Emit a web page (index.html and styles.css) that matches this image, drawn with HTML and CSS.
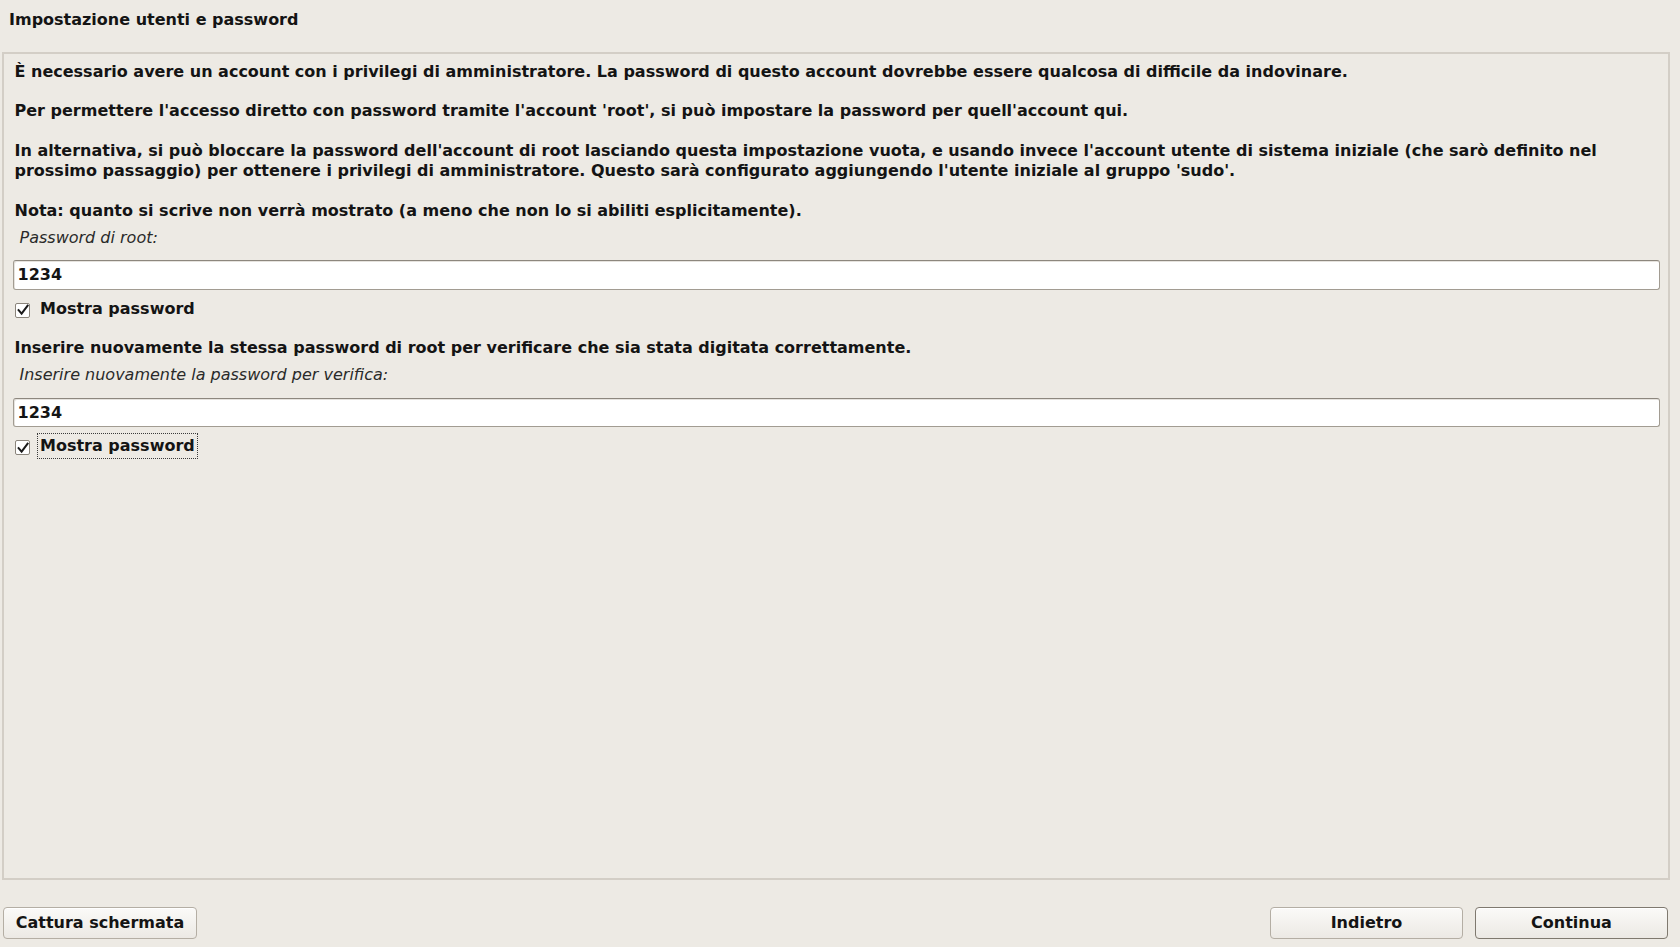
FILE: index.html
```html
<!DOCTYPE html>
<html lang="it">
<head>
<meta charset="utf-8">
<title>Impostazione utenti e password</title>
<link rel="stylesheet" href="styles.css">
</head>
<body>
<header class="title-bar">
  <h1 class="title">Impostazione utenti e password</h1>
</header>
<main class="frame">
  <p class="para para-first">È necessario avere un account con i privilegi di amministratore. La password di questo account dovrebbe essere qualcosa di difficile da indovinare.</p>
  <p class="para">Per permettere l'accesso diretto con password tramite l'account 'root', si può impostare la password per quell'account qui.</p>
  <p class="para">In alternativa, si può bloccare la password dell'account di root lasciando questa impostazione vuota, e usando invece l'account utente di sistema iniziale (che sarò definito nel prossimo passaggio) per ottenere i privilegi di amministratore. Questo sarà configurato aggiungendo l'utente iniziale al gruppo 'sudo'.</p>
  <p class="para para-tight">Nota: quanto si scrive non verrà mostrato (a meno che non lo si abiliti esplicitamente).</p>
  <div class="field-label">Password di root:</div>
  <div class="entry">1234</div>
  <div class="check-row check-row-gap">
    <span class="check-box"><svg width="12" height="12" viewBox="0 0 12 12"><path d="M1.6 6.2 L4.6 9.6 L10.6 1.6" fill="none" stroke="#1a1a1a" stroke-width="2" stroke-linecap="square"/></svg></span>
    <span class="check-label">Mostra password</span>
  </div>
  <p class="para para-tight">Inserire nuovamente la stessa password di root per verificare che sia stata digitata correttamente.</p>
  <div class="field-label">Inserire nuovamente la password per verifica:</div>
  <div class="entry">1234</div>
  <div class="check-row">
    <span class="check-box"><svg width="12" height="12" viewBox="0 0 12 12"><path d="M1.6 6.2 L4.6 9.6 L10.6 1.6" fill="none" stroke="#1a1a1a" stroke-width="2" stroke-linecap="square"/></svg></span>
    <span class="check-label check-label-focus">Mostra password</span>
  </div>
</main>
<footer class="button-bar">
  <button class="btn btn-wide" type="button">Cattura schermata</button>
  <div class="nav-buttons">
    <button class="btn" type="button">Indietro</button>
    <button class="btn btn-default" type="button">Continua</button>
  </div>
</footer>
</body>
</html>
```

FILE: styles.css
```css
html, body {
  margin: 0;
  padding: 0;
}

body {
  height: 947px;
  display: flex;
  flex-direction: column;
  background: #edeae4;
  color: #141414;
  font-family: "DejaVu Sans", "Liberation Sans", sans-serif;
  font-size: 16px;
  font-weight: bold;
  overflow: hidden;
}

.title-bar {
  flex: none;
  height: 52px;
  box-sizing: border-box;
  padding: 9.5px 0 0 9px;
}

.title {
  margin: 0;
  font-size: 16px;
  line-height: 20px;
  font-weight: bold;
}

.frame {
  flex: 1;
  margin: 0 10px 0 2px;
  border: 2px solid #d3cec6;
  padding: 7.7px 8px 0 9px;
  min-height: 0;
}

.para {
  margin: 0 0 20px;
  padding-left: 1.5px;
  line-height: 20px;
}

.para-first {
  margin-bottom: 19px;
}

.para-tight {
  margin-bottom: 7px;
}

.field-label {
  padding-left: 6.5px;
  line-height: 20px;
  font-style: italic;
  font-weight: normal;
  color: #2a2a2a;
}

.entry {
  margin-top: 12.5px;
  height: 29.5px;
  box-sizing: border-box;
  border: 1px solid #a29c92;
  border-top-color: #8d877e;
  border-radius: 3px;
  background: #ffffff;
  padding-left: 3.5px;
  line-height: 27.5px;
  box-shadow: inset 1px 1px 0 #e6e3de;
}

.check-row {
  display: flex;
  align-items: center;
  height: 26px;
  margin-top: 6px;
  padding-left: 2px;
}

.check-row-gap {
  margin-bottom: 16.5px;
}

.check-box {
  width: 15px;
  height: 15px;
  box-sizing: border-box;
  margin-top: 3px;
  border: 1px solid #8a847b;
  border-radius: 2px;
  background: #ffffff;
  display: flex;
  align-items: center;
  justify-content: center;
}

.check-box svg {
  display: block;
}

.check-label {
  margin-left: 7px;
  padding: 2px;
  border: 1px dotted transparent;
  line-height: 20px;
}

.check-label-focus {
  border-color: #3a3a3a;
}

.button-bar {
  flex: none;
  display: flex;
  justify-content: space-between;
  align-items: flex-start;
  padding: 27px 12px 8px 3px;
}

.nav-buttons {
  display: flex;
  gap: 12px;
}

.btn {
  width: 193px;
  height: 32px;
  box-sizing: border-box;
  border: 1px solid #b4aea4;
  border-radius: 4px;
  background: linear-gradient(#fbfaf8, #ece9e4);
  color: #141414;
  font-family: "DejaVu Sans", "Liberation Sans", sans-serif;
  font-size: 16px;
  font-weight: bold;
  line-height: 20px;
  padding: 0;
  box-shadow: inset 0 1px 0 #ffffff;
}

.btn-wide {
  width: 194px;
}

.btn-default {
  border-color: #7f796f;
}
```
